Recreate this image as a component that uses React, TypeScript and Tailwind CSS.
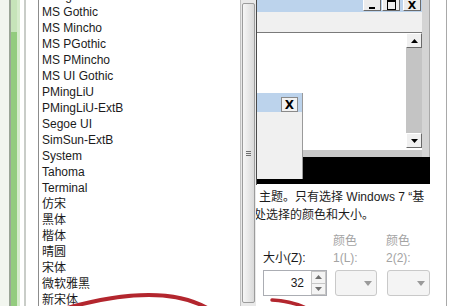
import React from "react";

const fonts = [
  "Mongolian Baiti",
  "MS Gothic",
  "MS Mincho",
  "MS PGothic",
  "MS PMincho",
  "MS UI Gothic",
  "PMingLiU",
  "PMingLiU-ExtB",
  "Segoe UI",
  "SimSun-ExtB",
  "System",
  "Tahoma",
  "Terminal",
  "仿宋",
  "黑体",
  "楷体",
  "晴圆",
  "宋体",
  "微软雅黑",
  "新宋体",
];

function TitleBtn({ children }: { children: React.ReactNode }) {
  return (
    <div className="w-[18px] h-[11px] bg-[#ececec] border-r border-b border-[#6b6b6b] border-l border-l-white flex items-center justify-center relative">
      {children}
    </div>
  );
}

function Arrow({ up, color = "#000" }: { up: boolean; color?: string }) {
  return (
    <svg width="7" height="4" viewBox="0 0 7 4">
      {up ? <path d="M0 4 L3.5 0 L7 4 Z" fill={color} /> : <path d="M0 0 L3.5 4 L7 0 Z" fill={color} />}
    </svg>
  );
}

export default function App() {
  return (
    <div className="w-[453px] h-[306px] bg-white flex overflow-hidden relative font-['Liberation_Sans','Noto_Sans_CJK_SC',sans-serif] text-[12px] text-[#1b1b1b]">
      {/* left strip */}
      <div className="w-[39px] h-full flex shrink-0">
        <div className="w-[9px] bg-[#f2f6ef]" />
        <div className="w-[2px] bg-[#9aa596]" />
        <div className="w-[6px] flex flex-col">
          <div className="h-[32px] bg-[#c6e4b9]" />
          <div className="flex-1 bg-[#93cc7e]" />
        </div>
        <div className="w-[3px] bg-[#d6eccc]" />
        <div className="w-[4px] bg-white" />
        <div className="w-[2px] bg-[#c9cdc8]" />
        <div className="flex-1 bg-white" />
        <div className="w-[1px] bg-[#8c8c8c]" />
      </div>

      {/* font list */}
      <div className="w-[201px] h-full overflow-hidden shrink-0 bg-white">
        <div className="-mt-[12px] flex flex-col">
          {fonts.map((f) => (
            <div key={f} className="h-[16px] leading-[16px] pl-[3px] whitespace-nowrap">
              {f}
            </div>
          ))}
        </div>
      </div>

      {/* list scrollbar */}
      <div className="w-[16px] h-full shrink-0 border-l border-[#c2c2c2] bg-[#e9e9e9] pt-[3px] px-[1px] flex flex-col">
        <div className="h-[300px] rounded-[2px] border border-[#9c9c9c] bg-gradient-to-r from-[#f6f6f6] to-[#dadada] flex items-center justify-center">
          <div className="flex flex-col gap-[1px]">
            <div className="w-[5px] h-[1px] bg-[#6f6f6f]" />
            <div className="w-[5px] h-[1px] bg-[#6f6f6f]" />
            <div className="w-[5px] h-[1px] bg-[#6f6f6f]" />
          </div>
        </div>
      </div>

      {/* right panel */}
      <div className="w-[197px] h-full flex shrink-0">
        <div className="w-[190px] h-full flex flex-col overflow-hidden">
          {/* preview */}
          <div className="w-[174px] h-[185px] border-l border-[#4a4a4a] relative flex flex-col shrink-0">
            <div className="h-[157px] flex">
              <div className="w-[165px] flex flex-col">
                <div className="h-[12px] bg-[#bcd3ec] flex justify-end items-start pr-[1px] gap-[1px]">
                  <TitleBtn>
                    <div className="absolute bottom-[1px] w-[6px] h-[2px] bg-black" />
                  </TitleBtn>
                  <TitleBtn>
                    <div className="w-[9px] h-[10px] border border-black border-t-2 -mt-[1px]" />
                  </TitleBtn>
                  <div className="w-[1px]" />
                  <TitleBtn>
                    <span className="font-['DejaVu_Sans',sans-serif] font-bold text-[11px] leading-[11px] text-black">X</span>
                  </TitleBtn>
                </div>
                <div className="h-[20px] bg-[#f0f0f0]" />
                <div className="h-[118px] border-t border-[#7a7a7a] border-b-2 border-b-white flex">
                  <div className="flex-1 bg-white" />
                  <div className="w-[16px] flex flex-col bg-[#c4c4c4]">
                    <div className="h-[15px] bg-[#f0f0f0] border border-t-white border-l-white border-r-[#6a6a6a] border-b-[#6a6a6a] flex items-center justify-center">
                      <Arrow up />
                    </div>
                    <div className="flex-1" />
                    <div className="h-[15px] bg-[#f0f0f0] border border-t-white border-l-white border-r-[#6a6a6a] border-b-[#6a6a6a] flex items-center justify-center">
                      <Arrow up={false} />
                    </div>
                  </div>
                </div>
                <div className="h-[7px] bg-[#c8c8c8]" />
              </div>
              <div className="w-[8px] bg-[#d4d4d4] border-r border-[#a8a8a8]" />
            </div>
            <div className="h-[27px] bg-black" />
            <div className="h-[1px] bg-white" />

            {/* small overlapping window */}
            <div className="absolute left-0 top-[93px] w-[46px] h-[86px] border-r border-[#9a9a9a] flex flex-col">
              <div className="h-[19px] bg-[#bcd3ec] flex justify-end items-start pt-[4px] pr-[4px]">
                <div className="w-[17px] h-[15px] bg-[#f2f2f2] border border-[#8a8a8a] flex items-center justify-center">
                  <span className="font-['DejaVu_Sans',sans-serif] font-bold text-[12px] leading-[12px] text-black">X</span>
                </div>
              </div>
              <div className="flex-1 bg-[#f0f0f0]" />
            </div>
          </div>

          {/* description */}
          <div className="mt-[3px] leading-[18px] whitespace-nowrap">
            <div className="pl-[3px]">主题。只有选择 Windows 7 “基</div>
            <div className="-ml-[2px]">处选择的颜色和大小。</div>
          </div>

          {/* controls */}
          <div className="mt-[9px] flex pl-[7px] whitespace-nowrap">
            <div className="w-[64px] flex flex-col">
              <div className="h-[16px]" />
              <div className="h-[16px] leading-[16px] mt-[1px]">大小(Z):</div>
              <div className="mt-[4px] h-[26px] border border-[#abadb3] bg-white flex items-center">
                <div className="flex-1 text-right pr-[7px] leading-[16px]">32</div>
                <div className="w-[15px] h-full flex flex-col">
                  <div className="flex-1 bg-[#f4f4f4] border border-[#c6c6c6] flex items-center justify-center">
                    <Arrow up color="#707070" />
                  </div>
                  <div className="flex-1 bg-[#f4f4f4] border border-t-0 border-[#c6c6c6] flex items-center justify-center">
                    <Arrow up={false} color="#707070" />
                  </div>
                </div>
              </div>
            </div>
            <div className="w-[44px] ml-[6px] flex flex-col text-[#a3a3a3]">
              <div className="h-[16px] leading-[16px]">颜色</div>
              <div className="h-[16px] leading-[16px] mt-[1px]">1(L):</div>
              <div className="mt-[4px] ml-[2px] h-[26px] rounded-[3px] border border-[#c9c9c9] bg-[#f4f4f4] flex items-center justify-end pr-[4px]">
                <svg width="8" height="5" viewBox="0 0 8 5">
                  <path d="M0 0 L4 5 L8 0 Z" fill="#9a9a9a" />
                </svg>
              </div>
            </div>
            <div className="w-[44px] ml-[9px] flex flex-col text-[#a3a3a3]">
              <div className="h-[16px] leading-[16px]">颜色</div>
              <div className="h-[16px] leading-[16px] mt-[1px]">2(2):</div>
              <div className="mt-[4px] ml-[1px] h-[26px] rounded-[3px] border border-[#c9c9c9] bg-[#f4f4f4] flex items-center justify-end pr-[4px]">
                <svg width="8" height="5" viewBox="0 0 8 5">
                  <path d="M0 0 L4 5 L8 0 Z" fill="#9a9a9a" />
                </svg>
              </div>
            </div>
          </div>
        </div>
        <div className="w-[1px] h-full bg-[#a9a9a9]" />
        <div className="flex-1 bg-white" />
      </div>

      {/* red annotation */}
      <svg className="absolute inset-0 pointer-events-none" width="453" height="306" viewBox="0 0 453 306">
        <path d="M50 313 Q165 277 215 313" stroke="#b3262e" strokeWidth="4" fill="none" strokeLinecap="round" />
        <path d="M272 300 Q290 301 304 307" stroke="#b3262e" strokeWidth="3.5" fill="none" strokeLinecap="round" />
      </svg>
    </div>
  );
}
